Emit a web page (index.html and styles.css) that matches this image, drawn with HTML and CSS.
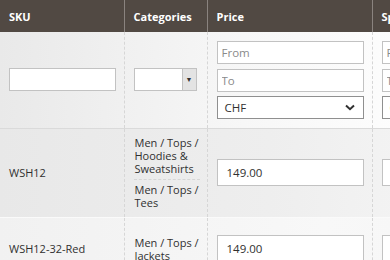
FILE: index.html
```html
<!DOCTYPE html>
<html>
<head>
    <title>Products Grid</title>
    <link rel="stylesheet" href="styles.css">
</head>
<body>

<table class="data-grid">
    <colgroup>
        <col class="col-sku">
        <col class="col-cat">
        <col class="col-price">
        <col class="col-special">
    </colgroup>
    <thead>
        <tr>
            <th>SKU</th>
            <th>Categories</th>
            <th>Price</th>
            <th>Special Price</th>
        </tr>
    </thead>
    <tbody>
        <tr class="filters">
            <td><input type="text" class="sku-input"></td>
            <td>
                <div class="fake-select">
                    <span class="fake-value"></span>
                    <span class="fake-button">&#9660;</span>
                </div>
            </td>
            <td>
                <div class="range">
                    <input type="text" placeholder="From">
                    <input type="text" placeholder="To">
                    <div class="currency">
                        <span>CHF</span>
                        <svg width="10" height="7" viewBox="0 0 10 7"><path d="M1 1.5 L5 5.2 L9 1.5" fill="none" stroke="#303030" stroke-width="2"/></svg>
                    </div>
                </div>
            </td>
            <td>
                <div class="range">
                    <input type="text" placeholder="From">
                    <input type="text" placeholder="To">
                    <div class="currency">
                        <span>CHF</span>
                        <svg width="10" height="7" viewBox="0 0 10 7"><path d="M1 1.5 L5 5.2 L9 1.5" fill="none" stroke="#303030" stroke-width="2"/></svg>
                    </div>
                </div>
            </td>
        </tr>
        <tr class="row-odd">
            <td>WSH12</td>
            <td class="cat-cell">
                <ul class="cat-list">
                    <li>Men / Tops / Hoodies &amp; Sweatshirts</li>
                    <li>Men / Tops / Tees</li>
                </ul>
            </td>
            <td><input type="text" class="price-input" value="149.00"></td>
            <td><input type="text" class="price-input" value=""></td>
        </tr>
        <tr class="row-even">
            <td>WSH12-32-Red</td>
            <td class="cat-cell">
                <ul class="cat-list">
                    <li>Men / Tops / Jackets</li>
                </ul>
            </td>
            <td><input type="text" class="price-input" value="149.00"></td>
            <td><input type="text" class="price-input" value=""></td>
        </tr>
    </tbody>
</table>

</body>
</html>
```

FILE: styles.css
```css
body {
    margin: 0;
    overflow: hidden;
    font-family: "Open Sans", "Liberation Sans", sans-serif;
    font-size: 11px;
    color: #303030;
    background-color: #f7f7f7;
}

.data-grid {
    border-collapse: collapse;
    table-layout: fixed;
    width: 540px;
}

.col-sku { width: 124px; }
.col-cat { width: 83px; }
.col-price { width: 165px; }
.col-special { width: 168px; }

.data-grid th {
    background-color: #514943;
    color: #fff;
    font-weight: 700;
    font-size: 11px;
    text-align: left;
    height: 32px;
    padding: 0 9px;
    border-left: 1px solid #8a837f;
    box-sizing: border-box;
    white-space: nowrap;
}

.data-grid th:first-child {
    border-left: none;
}

.data-grid td {
    padding: 0 8px 0 9px;
    border-left: 1px dashed #d6d6d6;
    vertical-align: middle;
}

.data-grid td:first-child {
    border-left: none;
}

.data-grid td.cat-cell {
    padding-right: 3px;
}

input {
    font-family: "Open Sans", "Liberation Sans", sans-serif;
    font-size: 11.5px;
    color: #303030;
    border: 1px solid #c2c2c2;
    background: #fff;
    box-sizing: border-box;
    height: 23px;
    width: 100%;
    padding: 0 4px;
    margin: 0;
    display: block;
    outline: none;
}

input::placeholder {
    color: #8a8a8a;
}

.filters {
    height: 96px;
    background: linear-gradient(to right, #e9e9e9, #f7f7f7 45%, #fdfdfd 75%, #fafafa);
    border-bottom: 1px solid #dadada;
}

.sku-input {
    width: 107px;
}

.fake-select {
    display: flex;
    width: 63px;
    height: 23px;
    border: 1px solid #c2c2c2;
    box-sizing: border-box;
    background: #fff;
}

.fake-value {
    flex: 1;
}

.fake-button {
    width: 13px;
    border-left: 1px solid #c2c2c2;
    background: #e3e3e3;
    color: #333;
    font-size: 7px;
    display: flex;
    align-items: center;
    justify-content: center;
}

.range {
    display: flex;
    flex-direction: column;
    gap: 4px;
    width: 147px;
}

.range input:first-child {
    margin-bottom: 1px;
}

.currency {
    display: flex;
    align-items: center;
    justify-content: space-between;
    height: 23px;
    border: 1px solid #8f8f8f;
    box-sizing: border-box;
    background: #fff;
    padding: 0 8px 0 7px;
    font-size: 11.5px;
}

.row-odd {
    height: 89px;
    background: linear-gradient(to right, #e8e8e8, #eeeeee 50%, #f3f3f3 75%, #efefef);
}

.row-even {
    height: 63px;
    background: linear-gradient(to right, #f1f1f1, #f8f8f8 60%, #f5f5f5);
    border-top: 1px solid #fafafa;
}

.price-input {
    height: 27px;
    width: 147px;
    padding: 0 9px;
}

.cat-list {
    list-style: none;
    margin: 0;
    padding: 0;
    line-height: 13px;
}

.cat-list li {
    padding: 0 0 0 1px;
    margin-right: 4px;
}

.cat-list li + li {
    border-top: 1px dashed #d6d6d6;
    margin-top: 4px;
    padding-top: 3px;
}
```
